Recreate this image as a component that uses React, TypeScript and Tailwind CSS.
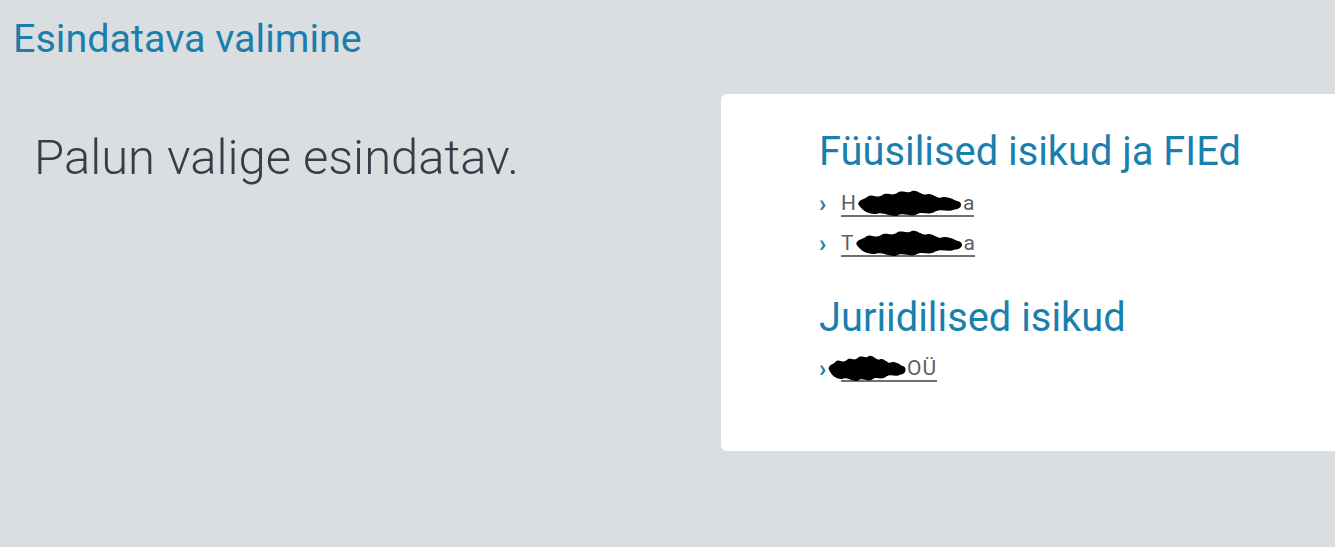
import React from "react";

function Blob({ w, h = 28, left = 0 }: { w: number; h?: number; left?: number }) {
  // rough marker scribble that hides a name
  return (
    <svg
      width={w}
      height={h}
      viewBox="0 0 100 26"
      preserveAspectRatio="none"
      className="absolute top-1/2 -translate-y-1/2"
      style={{ left }}
    >
      <path
        d="M2 14 C3 9 8 10 11 7 C15 4 19 9 24 6 C29 2 33 7 38 4 C43 0 47 5 52 2 C57 0 61 6 66 5 C71 3 75 9 80 8 C86 6 92 11 97 12 C100 15 97 19 92 19 C86 22 80 18 74 21 C68 25 62 20 56 24 C50 26 44 21 38 25 C32 26 26 21 20 23 C13 24 6 21 2 14 Z"
        fill="#000"
      />
    </svg>
  );
}

function Redacted({ w, blobW, left = 0 }: { w: number; blobW?: number; left?: number }) {
  return (
    <span className="relative inline-block h-[22px]" style={{ width: w }}>
      <Blob w={blobW ?? w} left={left} />
    </span>
  );
}

function Chevron() {
  return <span className="w-[22px] shrink-0 text-[24px] font-bold leading-none text-[#1a7fad]">›</span>;
}

function PersonLink({ first, last, hidden }: { first: string; last: string; hidden: number }) {
  return (
    <li className="flex h-[28px] items-center">
      <Chevron />
      <a href="#" className="inline-flex items-center border-b-2 border-[#6b6f76] text-[21px] leading-[24px] text-[#5b5f66]">
        <span>{first}</span>
        <Redacted w={hidden} />
        <span>{last}</span>
      </a>
    </li>
  );
}

export default function App() {
  return (
    <div className="h-[547px] w-[1335px] overflow-hidden bg-[#dadee1] font-['Roboto',sans-serif]">
      <h1 className="px-[13px] pt-[15px] text-[39.5px] font-normal leading-[48px] text-[#1a7fad]">Esindatava valimine</h1>
      <div className="mt-[31px] flex">
        <div className="w-[721px] shrink-0 pl-[34px] pt-[34px]">
          <p className="text-[49px] font-light leading-[60px] text-[#373c4a]">Palun valige esindatav.</p>
        </div>
        <div className="h-[357px] flex-1 rounded-l-[6px] bg-white pl-[98px] pt-[34px]">
          <h2 className="text-[39.8px] font-normal leading-[48px] text-[#1a7fad]">Füüsilised isikud ja FIEd</h2>
          <ul className="mt-[14px] flex flex-col gap-[12px]">
            <PersonLink first="H" last="a" hidden={107} />
            <PersonLink first="T" last="a" hidden={110} />
          </ul>
          <h2 className="mt-[36px] text-[39.8px] font-normal leading-[48px] text-[#1a7fad]">Juriidilised isikud</h2>
          <ul className="mt-[13px]">
            <li className="flex h-[28px] items-center">
              <Chevron />
              <a href="#" className="inline-flex items-center border-b-2 border-[#6b6f76] text-[21px] leading-[24px] text-[#5b5f66]">
                <Redacted w={66} blobW={80} left={-14} />
                <span className="tracking-[1px]">OÜ</span>
              </a>
            </li>
          </ul>
        </div>
      </div>
    </div>
  );
}
